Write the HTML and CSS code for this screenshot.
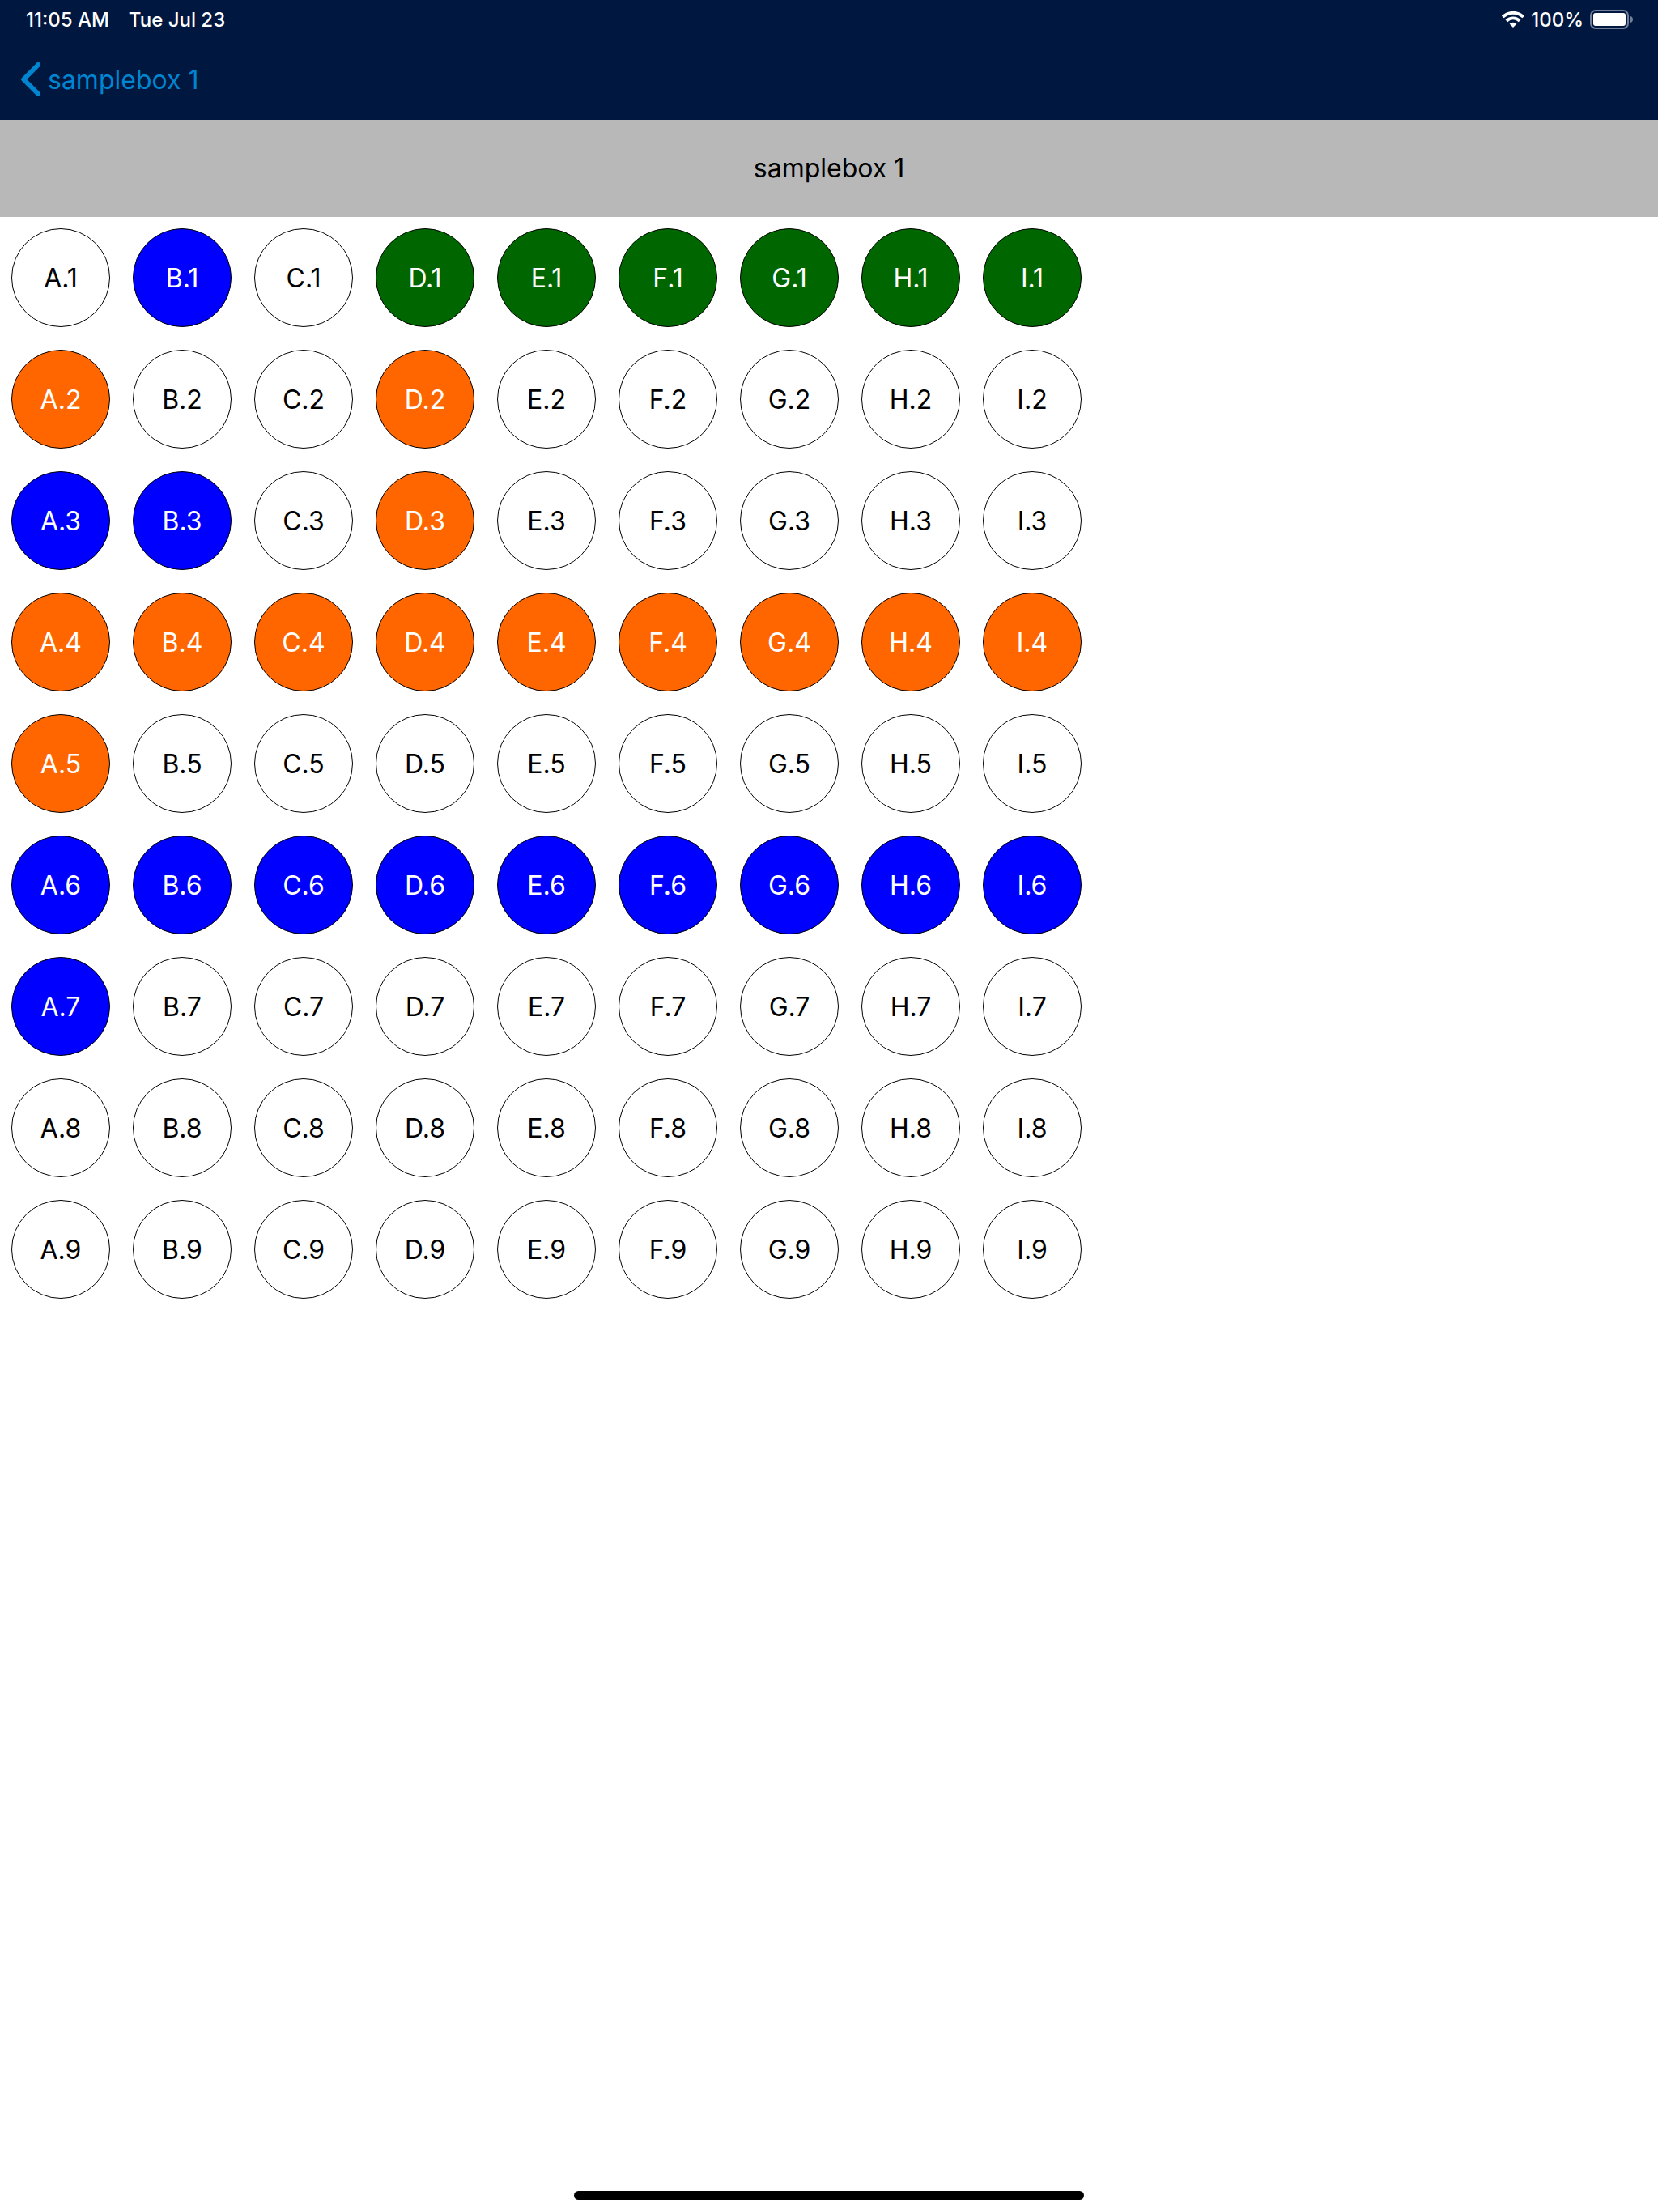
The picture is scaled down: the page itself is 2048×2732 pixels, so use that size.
FILE: index.html
```html
<!DOCTYPE html>
<html lang="en">
<head>
    <meta charset="UTF-8">
    <meta name="viewport" content="width=device-width, initial-scale=1.0">
    <title>samplebox 1</title>
    <link rel="stylesheet" href="styles.css">
</head>
<body>
    <header class="top-bar">
        <div class="status-bar">
            <div class="status-left">
                <span>11:05 AM</span>
                <span>Tue Jul 23</span>
            </div>
            <div class="status-right">
                <svg class="wifi-icon" viewBox="0 0 28 20" width="28" height="20" aria-hidden="true">
                    <g fill="none" stroke="#fff" stroke-width="3.8">
                        <path d="M1.3 7A18 18 0 0 1 26.7 7"/>
                        <path d="M5.9 11.8A11.5 11.5 0 0 1 22.1 11.8"/>
                    </g>
                    <path d="M14 20L9.6 15.6A6.2 6.2 0 0 1 18.4 15.6Z" fill="#fff"/>
                </svg>
                <span>100%</span>
                <svg class="battery-icon" viewBox="0 0 54 24" width="54" height="24" aria-hidden="true">
                    <rect x="1" y="1" width="46" height="22" rx="6" fill="none" stroke="#737f97" stroke-width="2"/>
                    <rect x="4" y="4" width="40" height="16" rx="3" fill="#fff"/>
                    <path d="M50 8C54 9 54 15 50 16Z" fill="#737f97"/>
                </svg>
            </div>
        </div>
        <nav class="nav-bar">
            <a class="back-link" href="#">
                <svg viewBox="0 0 24 42" width="24" height="42" aria-hidden="true">
                    <path d="M21.2 3L3.2 21L21.2 39" fill="none" stroke="#0085d0" stroke-width="6" stroke-linecap="round" stroke-linejoin="round"/>
                </svg>
                <span>samplebox 1</span>
            </a>
        </nav>
    </header>

    <h1 class="box-title">samplebox 1</h1>

    <main id="boxGrid" class="box-grid"></main>

    <footer class="home-area">
        <div class="home-indicator"></div>
    </footer>

    <script>
        const columns = "ABCDEFGHI";

        // one string per row: . empty, b blue, g green, o orange
        const rows = [
            ".b.gggggg",
            "o..o.....",
            "bb.o.....",
            "ooooooooo",
            "o........",
            "bbbbbbbbb",
            "b........",
            ".........",
            "........."
        ];

        const colorClasses = { b: "blue", g: "green", o: "orange" };

        const grid = document.getElementById("boxGrid");
        rows.forEach((row, rowIndex) => {
            [...row].forEach((state, colIndex) => {
                const cell = document.createElement("button");
                cell.type = "button";
                cell.className = "cell";
                if (colorClasses[state]) cell.classList.add(colorClasses[state]);
                cell.textContent = columns[colIndex] + "." + (rowIndex + 1);
                grid.appendChild(cell);
            });
        });
    </script>
</body>
</html>
```

FILE: styles.css
```css
:root {
    --navy: #00173f;
    --link-blue: #0085d0;
    --title-gray: #b8b8b8;
}

* {
    box-sizing: border-box;
}

body {
    margin: 0;
    min-height: 100vh;
    display: flex;
    flex-direction: column;
    background-color: #fff;
    color: #000;
    font-family: Inter, 'Liberation Sans', sans-serif;
    font-size: 32px;
}

.top-bar {
    background-color: var(--navy);
}

.status-bar {
    display: flex;
    justify-content: space-between;
    height: 48px;
    padding: 0 30px 0 32px;
    color: #fff;
    font-size: 24px;
    font-weight: 500;
}

.status-left,
.status-right {
    display: flex;
    align-items: center;
}

.status-left {
    gap: 24px;
}

.status-right {
    gap: 8px;
}

.nav-bar {
    display: flex;
    align-items: center;
    height: 100px;
    padding: 0 26px;
}

.back-link {
    display: flex;
    align-items: center;
    gap: 9px;
    color: var(--link-blue);
    text-decoration: none;
}

.box-title {
    margin: 0;
    padding: 40px;
    background-color: var(--title-gray);
    font-size: 32px;
    font-weight: 400;
    line-height: 40px;
    text-align: center;
}

.box-grid {
    display: grid;
    grid-template-columns: repeat(9, 122px);
    gap: 28px;
    padding: 14px;
}

.cell {
    height: 122px;
    padding: 0;
    border: 1px solid #000;
    border-radius: 50%;
    background-color: #fff;
    color: #000;
    font: inherit;
    cursor: pointer;
}

.blue,
.green,
.orange {
    color: #fff;
}

.blue {
    background-color: #0000ff;
}

.green {
    background-color: #006600;
}

.orange {
    background-color: #ff6600;
}

.home-area {
    display: flex;
    justify-content: center;
    margin-top: auto;
    padding-bottom: 15px;
}

.home-indicator {
    width: 630px;
    height: 11px;
    border-radius: 6px;
    background-color: #000;
}
```
